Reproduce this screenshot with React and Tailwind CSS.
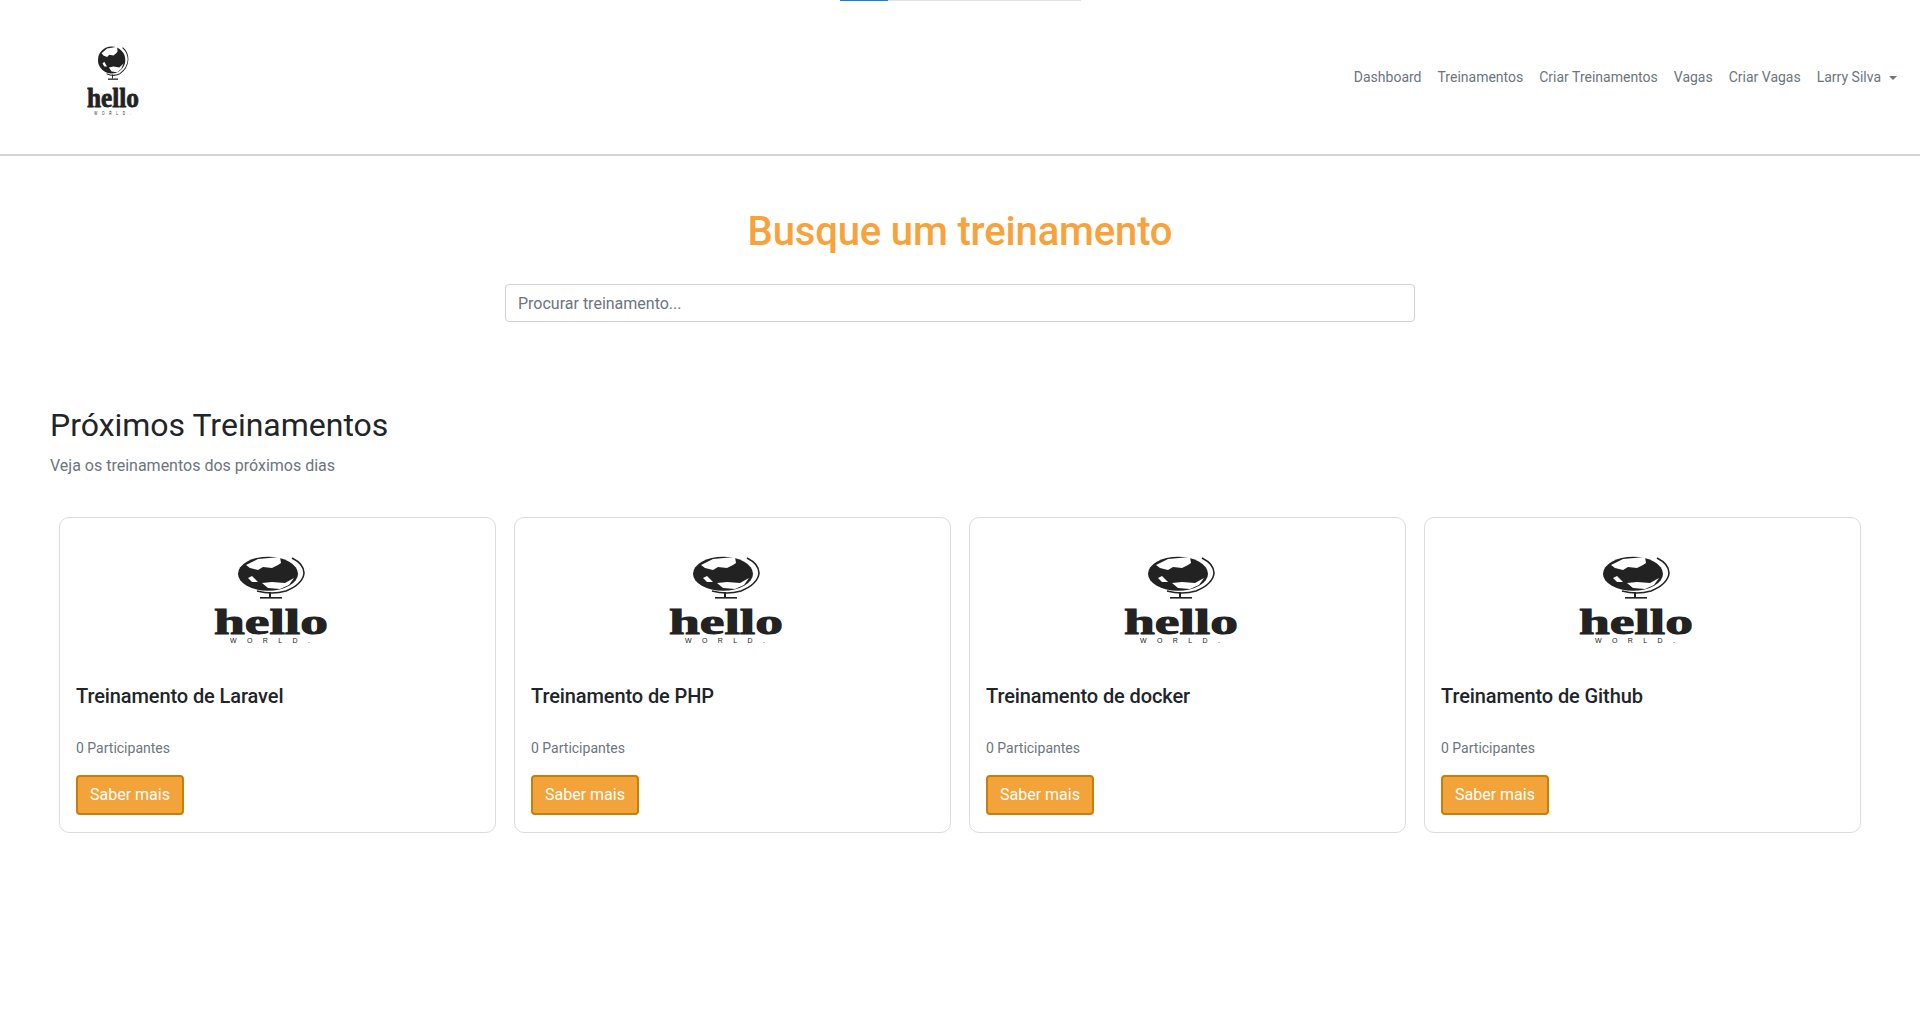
import React from "react";

const trainings = [
  "Treinamento de Laravel",
  "Treinamento de PHP",
  "Treinamento de docker",
  "Treinamento de Github",
];

const navLinks = ["Dashboard", "Treinamentos", "Criar Treinamentos", "Vagas", "Criar Vagas"];

// logo is stretched differently in the navbar and the cards, hence preserveAspectRatio none
const Logo = ({ className }) => (
  <svg viewBox="0 0 114 87" preserveAspectRatio="none" className={className}>
    <ellipse cx="54" cy="17.7" rx="30" ry="17" fill="#222" />
    <path d="M32 9L44 3L66 1L67 7L64 9L58 12L49 11L44 14L36 12Z" fill="#fff" />
    <path d="M34 22L38 20L41 23L44 26L38 26Z" fill="#fff" />
    <path d="M48 27L58 26L71 27L80 22L75 29L66 33L54 32Z" fill="#fff" />
    <path d="M78 2Q90 8 90 17Q89 28 72 35Q58 39 43 35" fill="none" stroke="#222" strokeWidth="1.6" />
    <rect x="55" y="36" width="2" height="5" fill="#222" />
    <rect x="46" y="41" width="22" height="1.6" fill="#222" />
    <text
      x="0"
      y="77.5"
      fontFamily="'Liberation Serif', serif"
      fontWeight="700"
      fontSize="35"
      textLength="114"
      lengthAdjust="spacingAndGlyphs"
      fill="#222"
      stroke="#222"
      strokeWidth="1"
    >
      hello
    </text>
    <text
      x="16"
      y="86.5"
      fontFamily="'Liberation Sans', sans-serif"
      fontSize="7"
      textLength="80"
      fill="#222"
    >
      WORLD.
    </text>
  </svg>
);

const TrainingCard = ({ title }) => (
  <div className="flex flex-col h-[316px] rounded-[10px] border border-[#dcdcdc] bg-white px-4 pt-[38px]">
    <Logo className="ml-[138px] h-[87px] w-[114px]" />
    <h5 className="mt-[41px] text-[20px] leading-6 font-medium tracking-[-0.1px] text-[#212529]">{title}</h5>
    <p className="mt-[30px] text-[14px] leading-[21px] text-[#6c757d]">0 Participantes</p>
    <button className="mt-4 h-10 w-[108px] rounded border-2 border-[#c77f0a] bg-[#f2a33a] text-base text-white">
      Saber mais
    </button>
  </div>
);

const App = () => {
  return (
    <div className="relative min-h-[1032px] bg-white font-['Roboto',sans-serif]">
      {/* scroll strip at the top of the page */}
      <div className="absolute left-[840px] top-0 h-px w-[241px] bg-[#e2e2e2]">
        <div className="h-px w-12 bg-[#0d84e3]" />
      </div>

      <nav className="flex h-[156px] items-center justify-between border-b-2 border-[#d4d4d4] pl-[87px] pr-[23px]">
        <Logo className="mt-[7px] h-[69px] w-[52px]" />
        <ul className="mt-[1px] flex items-center gap-4 text-[14px] leading-[21px] text-[#6c757d]">
          {navLinks.map((link) => (
            <li key={link}>{link}</li>
          ))}
          <li className="flex items-center">
            Larry Silva
            <span className="ml-2 h-0 w-0 border-x-[4px] border-t-[4px] border-x-transparent border-t-[#6c757d]" />
          </li>
        </ul>
      </nav>

      <section className="flex flex-col items-center pt-[52px]">
        <h1 className="text-[40px] leading-[48px] font-medium tracking-[-0.15px] text-[#f8a23d]">Busque um treinamento</h1>
        <input
          type="text"
          placeholder="Procurar treinamento..."
          className="mt-[28px] h-[38px] w-[910px] rounded border border-[#ced4da] px-3 text-base text-[#495057] placeholder:text-[#6c757d]"
        />
      </section>

      <section className="px-[50px] pt-[84px]">
        <h2 className="text-[32px] leading-[38px] text-[#212529]">Próximos Treinamentos</h2>
        <p className="mt-[10px] text-base leading-6 text-[#6c757d]">Veja os treinamentos dos próximos dias</p>
        <div className="mt-[39px] grid grid-cols-4 gap-[18px] px-[9px]">
          {trainings.map((title) => (
            <TrainingCard key={title} title={title} />
          ))}
        </div>
      </section>
    </div>
  );
};

export default App;
